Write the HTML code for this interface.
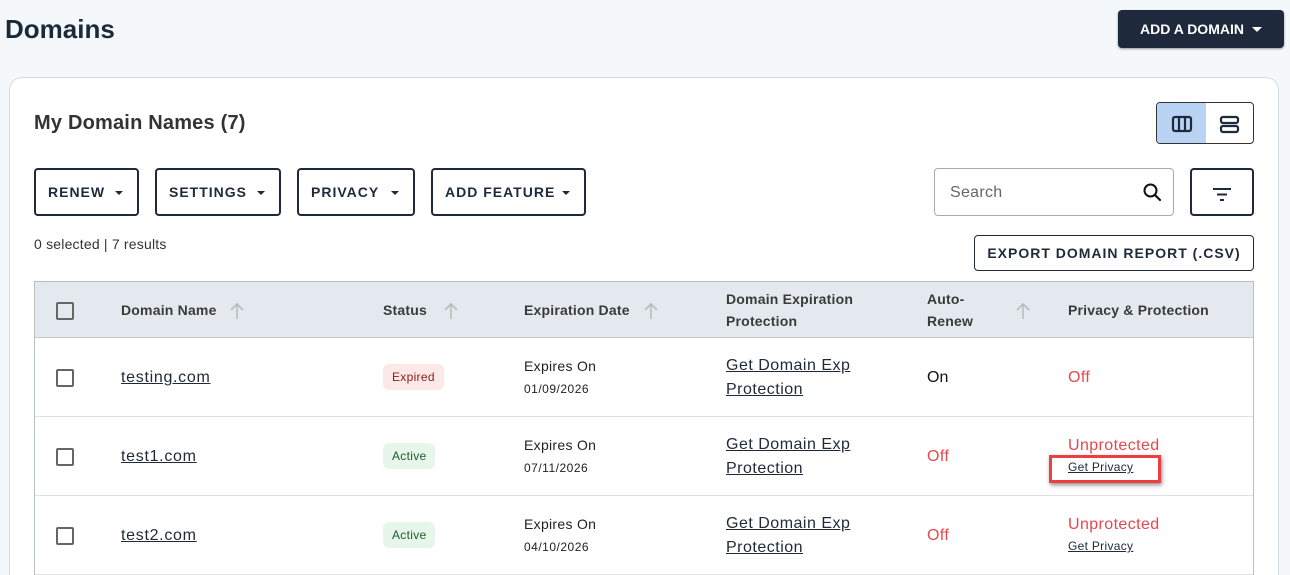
<!DOCTYPE html>
<html><head><meta charset="utf-8">
<style>
*{box-sizing:border-box;margin:0;padding:0}
html{width:1290px;height:575px;overflow:hidden}
body{width:1290px;height:575px;overflow:hidden;background:#f5f8fb;font-family:"Liberation Sans",Arial,sans-serif;color:#1f2937;position:relative}
.a{position:absolute}
h1{position:absolute;left:5px;top:14px;font-size:26px;font-weight:700;color:#1b2a3a;letter-spacing:0}
.add{left:1118px;top:10px;width:166px;height:38px;background:#1e2a3b;border-radius:4px;color:#fff;font-weight:700;font-size:14px;display:flex;align-items:center;justify-content:center;gap:8px;box-shadow:0 1px 2px rgba(0,0,0,.4)}
.tri{width:0;height:0;border-left:5px solid transparent;border-right:5px solid transparent;border-top:5px solid currentColor}
.card{left:9px;top:77px;width:1270px;height:498px;background:#fff;border:1px solid #d4d9df;border-bottom:none;border-radius:13px 13px 0 0}
.title{left:34px;top:112px;font-size:20px;font-weight:700;color:#333;letter-spacing:0.2px}
.btn{top:168px;height:48px;border:2px solid #1e2a3b;border-radius:4px;display:flex;align-items:center;padding-left:12px;font-size:14px;font-weight:700;letter-spacing:1px;color:#1e2a3b}
.btn .tri{border-left-width:4px;border-right-width:4px;border-top-width:4px;position:absolute;right:14px;top:21px}
.tgl{left:1156px;top:102px;width:98px;height:42px;border:1px solid #333;border-radius:4px;overflow:hidden}
.search{left:934px;top:168px;width:240px;height:48px;border:1px solid #aaa;border-radius:4px;font-size:16px;color:#666;padding:15px 0 0 15px;letter-spacing:0.3px}
.filt{left:1190px;top:168px;width:64px;height:48px;border:2px solid #1e2a3b;border-radius:4px}
.sel{left:34px;top:236px;font-size:14px;color:#333;letter-spacing:0.2px}
.exp{left:974px;top:235px;width:280px;height:36px;border:1px solid #1e2a3b;border-radius:4px;font-size:14px;font-weight:700;letter-spacing:1px;display:flex;align-items:center;justify-content:center;color:#1e2a3b}
.tbl{left:34px;top:281px;width:1220px;height:294px;border:1px solid #b8bdc2;border-bottom:none;background:#fff;overflow:hidden}
.hd{left:0;top:0;width:1218px;height:56px;background:#e3e9ee;border-bottom:1px solid #c3c8cc}
.hl{font-size:14px;font-weight:700;color:#3a3a3a;line-height:22px;letter-spacing:0.2px}
.cb{width:18px;height:18px;border:2px solid #666;border-radius:2px}
.row{left:0;width:1218px;height:79px;border-bottom:1px solid #dde1e4}
.dn{font-size:16px;color:#1f2937;text-decoration:underline;letter-spacing:0.7px}
.badge{font-size:12px;padding:6px 9px;border-radius:6px;letter-spacing:0.3px}
.eo{font-size:14px;color:#222;letter-spacing:0.3px}
.ed{font-size:12px;color:#222;letter-spacing:0.5px}
.gp{font-size:16px;color:#1f2937;text-decoration:underline;line-height:24px;letter-spacing:0.5px}
.red{color:#e5484d;font-size:16px;letter-spacing:0.4px}
.sm{font-size:12px;text-decoration:underline;color:#1f2937;letter-spacing:0.3px}
</style></head><body>
<h1>Domains</h1>
<div class="a add">ADD A DOMAIN <span class="tri"></span></div>
<div class="a card"></div>
<div class="a title">My Domain Names (7)</div>
<div class="a tgl">
 <div class="a" style="left:0;top:0;width:49px;height:42px;background:#b9d3f5"></div>
 <svg class="a" style="left:14px;top:12px" width="22" height="18" viewBox="0 0 22 18"><rect x="2" y="2" width="18" height="14" rx="2" fill="none" stroke="#1e2a3b" stroke-width="2.2"/><line x1="8" y1="2" x2="8" y2="16" stroke="#1e2a3b" stroke-width="2.2"/><line x1="14" y1="2" x2="14" y2="16" stroke="#1e2a3b" stroke-width="2.2"/></svg>
 <svg class="a" style="left:62px;top:12px" width="22" height="20" viewBox="0 0 22 20"><rect x="2" y="2" width="17" height="6" rx="2" fill="none" stroke="#1e2a3b" stroke-width="2.2"/><rect x="2" y="11" width="17" height="6" rx="2" fill="none" stroke="#1e2a3b" stroke-width="2.2"/></svg>
</div>
<div class="a btn" style="left:34px;width:105px">RENEW<span class="tri"></span></div>
<div class="a btn" style="left:155px;width:126px">SETTINGS<span class="tri"></span></div>
<div class="a btn" style="left:297px;width:118px">PRIVACY<span class="tri"></span></div>
<div class="a btn" style="left:431px;width:155px">ADD FEATURE<span class="tri"></span></div>
<div class="a search">Search
 <svg class="a" style="left:207px;top:13px" width="22" height="22" viewBox="0 0 22 22"><circle cx="8.5" cy="8.5" r="6" fill="none" stroke="#111" stroke-width="2"/><line x1="13" y1="13" x2="18" y2="18" stroke="#111" stroke-width="2.2" stroke-linecap="round"/></svg>
</div>
<div class="a filt"><svg class="a" style="left:20px;top:16px" width="22" height="16" viewBox="0 0 22 16"><line x1="1" y1="3" x2="19" y2="3" stroke="#1e2a3b" stroke-width="2"/><line x1="5" y1="8.5" x2="15" y2="8.5" stroke="#1e2a3b" stroke-width="2"/><line x1="8" y1="14" x2="12" y2="14" stroke="#1e2a3b" stroke-width="2"/></svg></div>
<div class="a sel">0 selected | 7 results</div>
<div class="a exp">EXPORT DOMAIN REPORT (.CSV)</div>

<div class="a tbl">
 <div class="a hd">
  <div class="a cb" style="left:21px;top:20px"></div>
  <div class="a hl" style="left:86px;top:17px">Domain Name</div>
  <div class="a hl" style="left:348px;top:17px">Status</div>
  <div class="a hl" style="left:489px;top:17px">Expiration Date</div>
  <div class="a hl" style="left:691px;top:6px">Domain Expiration<br>Protection</div>
  <div class="a hl" style="left:892px;top:6px">Auto-<br>Renew</div>
  <div class="a hl" style="left:1033px;top:17px">Privacy &amp; Protection</div>
  <svg class="a" style="left:194px;top:20px" width="16" height="18"><path d="M8 17V2M2 8l6-6 6 6" fill="none" stroke="#bbb" stroke-width="1.6"/></svg>
  <svg class="a" style="left:408px;top:20px" width="16" height="18"><path d="M8 17V2M2 8l6-6 6 6" fill="none" stroke="#bbb" stroke-width="1.6"/></svg>
  <svg class="a" style="left:608px;top:20px" width="16" height="18"><path d="M8 17V2M2 8l6-6 6 6" fill="none" stroke="#bbb" stroke-width="1.6"/></svg>
  <svg class="a" style="left:980px;top:20px" width="16" height="18"><path d="M8 17V2M2 8l6-6 6 6" fill="none" stroke="#bbb" stroke-width="1.6"/></svg>
 </div>
 <div class="a row" style="top:56px">
  <div class="a cb" style="left:21px;top:31px"></div>
  <div class="a dn" style="left:86px;top:31px">testing.com</div>
  <div class="a badge" style="left:348px;top:26px;background:#fde8e8;color:#8b1c1c">Expired</div>
  <div class="a eo" style="left:489px;top:20px">Expires On</div>
  <div class="a ed" style="left:489px;top:44px">01/09/2026</div>
  <div class="a gp" style="left:691px;top:16px">Get Domain Exp<br>Protection</div>
  <div class="a" style="left:892px;top:31px;font-size:16px;color:#111">On</div>
  <div class="a red" style="left:1033px;top:31px">Off</div>
 </div>
 <div class="a row" style="top:135px">
  <div class="a cb" style="left:21px;top:31px"></div>
  <div class="a dn" style="left:86px;top:31px">test1.com</div>
  <div class="a badge" style="left:348px;top:26px;background:#e7f6ea;color:#1e5a2d">Active</div>
  <div class="a eo" style="left:489px;top:20px">Expires On</div>
  <div class="a ed" style="left:489px;top:44px">07/11/2026</div>
  <div class="a gp" style="left:691px;top:16px">Get Domain Exp<br>Protection</div>
  <div class="a red" style="left:892px;top:31px">Off</div>
  <div class="a red" style="left:1033px;top:20px">Unprotected</div>
  <div class="a sm" style="left:1033px;top:43px">Get Privacy</div>
 </div>
 <div class="a row" style="top:214px">
  <div class="a cb" style="left:21px;top:31px"></div>
  <div class="a dn" style="left:86px;top:31px">test2.com</div>
  <div class="a badge" style="left:348px;top:26px;background:#e7f6ea;color:#1e5a2d">Active</div>
  <div class="a eo" style="left:489px;top:20px">Expires On</div>
  <div class="a ed" style="left:489px;top:44px">04/10/2026</div>
  <div class="a gp" style="left:691px;top:16px">Get Domain Exp<br>Protection</div>
  <div class="a red" style="left:892px;top:31px">Off</div>
  <div class="a red" style="left:1033px;top:20px">Unprotected</div>
  <div class="a sm" style="left:1033px;top:43px">Get Privacy</div>
 </div>
</div>
<div class="a" style="left:1049px;top:455px;width:112px;height:28px;border:3px solid #ef3e42;box-shadow:1px 2px 4px rgba(0,0,0,.45)"></div>
</body></html>
